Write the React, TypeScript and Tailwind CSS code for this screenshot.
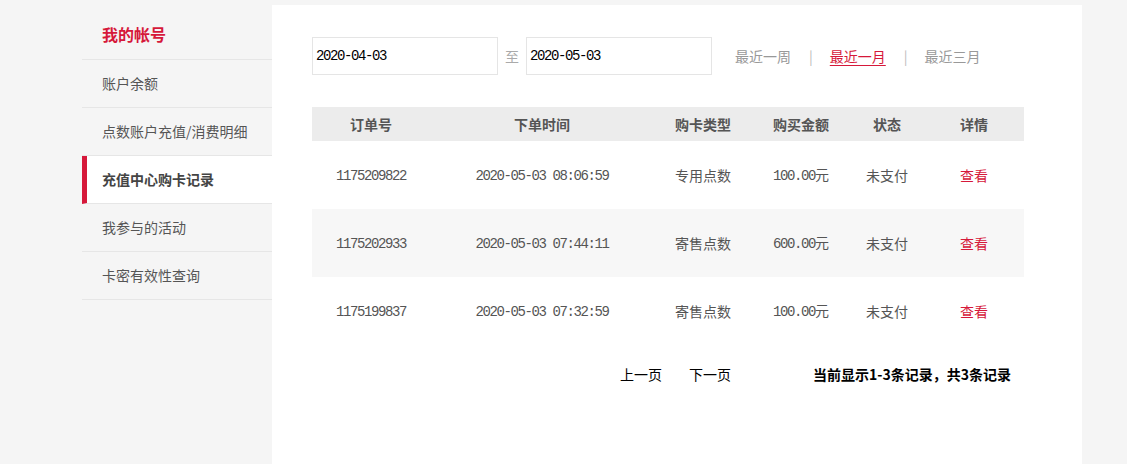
import React from "react";

const cjk = { fontFamily: '"Noto Sans CJK SC", "Noto Sans", sans-serif' };
const mono = { fontFamily: '"Liberation Mono", "Noto Sans CJK SC", monospace' };

const rows = [
  { id: "1175209822", time: "2020-05-03 08:06:59", type: "专用点数", amount: "100.00" },
  { id: "1175202933", time: "2020-05-03 07:44:11", type: "寄售点数", amount: "600.00" },
  { id: "1175199837", time: "2020-05-03 07:32:59", type: "寄售点数", amount: "100.00" },
];

const cols = ["w-[118px]", "w-[224px]", "w-[98px]", "w-[98px]", "w-[74px]", "w-[100px]"];

function Mono({ children }: { children: React.ReactNode }) {
  return (
    <span style={mono} className="tracking-[-1.4px]">
      {children}
    </span>
  );
}

export default function App() {
  const menu = ["账户余额", "点数账户充值/消费明细", "充值中心购卡记录", "我参与的活动", "卡密有效性查询"];
  return (
    <div className="min-h-[464px] w-[1127px] bg-[#f5f5f5] flex" style={cjk}>
      <div className="w-[82px] shrink-0" />
      <div className="w-[190px] shrink-0">
        <div className="h-[60px] border-b border-[#e6e6e6] pl-[20px] flex items-center pt-[8px]">
          <span className="text-[16px] font-bold text-[#d6183a]">我的帐号</span>
        </div>
        {menu.map((m, i) => {
          const active = i === 2;
          return (
            <div
              key={m}
              className={
                active
                  ? "h-[48px] border-b border-[#e6e6e6] bg-white border-l-[5px] border-l-[#d6183a] pl-[15px] flex items-center text-[14px] font-bold text-[#444]"
                  : "h-[48px] border-b border-[#e6e6e6] pl-[20px] flex items-center text-[14px] text-[#555]"
              }
            >
              {m}
            </div>
          );
        })}
      </div>
      <div className="w-[810px] shrink-0 mt-[5px] bg-white pl-[40px] pt-[32px]">
        <div className="flex items-center h-[38px]">
          <div className="w-[186px] h-[38px] border border-[#e5e5e5] flex items-center pl-[3px] text-[14px] text-black">
            <Mono>2020-04-03</Mono>
          </div>
          <span className="mx-[7px] text-[14px] text-[#aaa]">至</span>
          <div className="w-[186px] h-[38px] border border-[#e5e5e5] flex items-center pl-[3px] text-[14px] text-black">
            <Mono>2020-05-03</Mono>
          </div>
          <span className="ml-[23px] text-[14px] text-[#999]">最近一周</span>
          <span className="ml-[18px] mr-[17px] text-[14px] text-[#bbb]">|</span>
          <span className="text-[14px] text-[#d6183a] underline underline-offset-[3px]">最近一月</span>
          <span className="ml-[18px] mr-[17px] text-[14px] text-[#bbb]">|</span>
          <span className="text-[14px] text-[#999]">最近三月</span>
        </div>

        <div className="mt-[32px] w-[712px]">
          <div className="flex h-[34px] bg-[#ececec] items-center text-[14px] font-bold text-[#555]">
            {["订单号", "下单时间", "购卡类型", "购买金额", "状态", "详情"].map((h, i) => (
              <div key={h} className={`${cols[i]} text-center`}>
                {h}
              </div>
            ))}
          </div>
          {rows.map((r, idx) => (
            <div
              key={r.id}
              className={`flex h-[68px] items-center text-[14px] text-[#555] ${idx === 1 ? "bg-[#f7f7f7]" : "bg-white"}`}
            >
              <div className={`${cols[0]} text-center`}>
                <Mono>{r.id}</Mono>
              </div>
              <div className={`${cols[1]} text-center`}>
                <Mono>{r.time}</Mono>
              </div>
              <div className={`${cols[2]} text-center`}>{r.type}</div>
              <div className={`${cols[3]} text-center`}>
                <Mono>{r.amount}</Mono>
                <span>元</span>
              </div>
              <div className={`${cols[4]} text-center`}>未支付</div>
              <div className={`${cols[5]} text-center text-[#d6183a]`}>查看</div>
            </div>
          ))}
          <div className="flex items-center mt-[19px] h-[20px] text-[14px] text-black">
            <span className="ml-[308px]">上一页</span>
            <span className="ml-[27px]">下一页</span>
            <span className="ml-auto mr-[13px] font-bold">当前显示1-3条记录，共3条记录</span>
          </div>
        </div>
      </div>
    </div>
  );
}
